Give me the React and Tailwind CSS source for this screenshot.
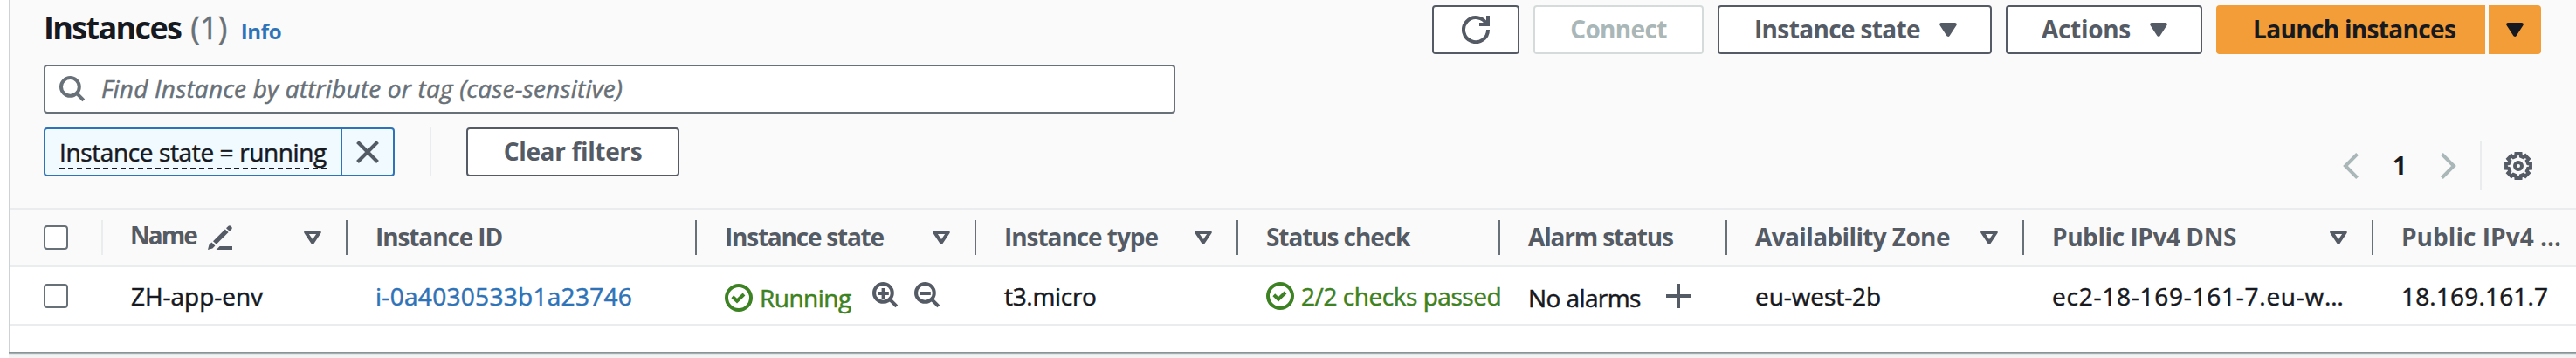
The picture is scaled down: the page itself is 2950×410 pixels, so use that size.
import React from "react";

const Caret = ({ hollow = false }) => (
  <svg width="20" height="16" viewBox="0 0 20 16" className="shrink-0" fill={hollow ? "none" : "currentColor"} stroke="currentColor" strokeWidth="4" strokeLinejoin="round">
    <path d={hollow ? "M2.2 2h15.6L10 13.6z" : "M2.2 2h15.6L10 13.8z"} />
  </svg>
);

const CheckCircle = () => (
  <svg width="32" height="32" viewBox="0 0 16 16" className="shrink-0" fill="none" stroke="currentColor" strokeWidth="2">
    <circle cx="8" cy="8" r="7" />
    <path d="M4.4 7.4 7 9.9l4-3.9" />
  </svg>
);

const Magnifier = ({ sign }) => (
  <svg width="30" height="30" viewBox="0 0 30 30" className="shrink-0" fill="none" stroke="currentColor" strokeWidth="4">
    <circle cx="12.4" cy="12.4" r="10.4" />
    <path d="m19.4 19.4 8.4 8.4" />
    {sign && <path d="M6.4 13h12.4" />}
    {sign === "plus" && <path d="M12.6 7v12" />}
  </svg>
);

const Refresh = () => (
  <svg width="32" height="32" viewBox="0 0 16 16" fill="none" stroke="currentColor" strokeWidth="2">
    <path d="M10 5h5V0" />
    <path d="M15 8a7 7 0 1 1-.7-3" />
  </svg>
);

const Pencil = () => (
  <svg width="28" height="28" viewBox="0 0 28 28" fill="currentColor">
    <path d="M23.6 0.8a2 2 0 0 1 2.6 0l1 1a2 2 0 0 1 0 2.6L24.8 6.8 21 3.2z" />
    <path d="M19.8 4.4 23.6 8 9.8 21.8 6 18.2z" />
    <path d="M4.4 19.6 8.4 23.4 5.4 26.6 0 28 1.4 22.6z" />
    <path d="M13.6 24H28v4H9.6z" />
  </svg>
);

const gearPath = (() => {
  const pts = [];
  for (let i = 0; i < 8; i++) {
    for (const [r, a] of [[11.4, -14.5], [14.2, -10.5], [14.2, 10.5], [11.4, 14.5]]) {
      const t = ((i * 45 + a) * Math.PI) / 180;
      pts.push(`${(16 + r * Math.cos(t)).toFixed(2)} ${(16 + r * Math.sin(t)).toFixed(2)}`);
    }
  }
  return `M${pts.join("L")}Z`;
})();

const Gear = () => (
  <svg width="32" height="32" viewBox="0 0 32 32" fill="none" stroke="currentColor" strokeWidth="4">
    <path d={gearPath} />
    <circle cx="16" cy="16" r="4" />
  </svg>
);

const Checkbox = () => <span className="h-7 w-7 rounded-[4px] border-2 border-[#687078] bg-white" />;

const Button = ({ className, children }) => (
  <button className={`flex h-14 items-center rounded-[4px] border-2 bg-white font-bold ${className}`}>{children}</button>
);

const HeadCell = ({ className, sort, children }) => (
  <div className={`flex h-full shrink-0 items-center justify-between pl-8 ${className}`}>
    <div className="flex items-center whitespace-nowrap pb-[2px]">{children}</div>
    <div className="flex items-center gap-7">
      {sort && <Caret hollow />}
      <span className="h-10 w-0.5 bg-[#687078]" />
    </div>
  </div>
);

const Cell = ({ className, children }) => (
  <div className={`flex h-full shrink-0 items-center overflow-hidden whitespace-nowrap pl-8 [-webkit-text-stroke:0.5px] ${className}`}>{children}</div>
);

export default function App() {
  return (
    <div className="flex h-[410px] w-[2950px] overflow-hidden bg-white pl-2.5 font-['Open_Sans','Noto_Sans',sans-serif] text-[28px] leading-10 text-[#16191f]">
      <div className="flex min-w-0 flex-1 flex-col bg-[#f2f3f3]">
        <div className="flex h-[403px] flex-col border-l-2 border-[#ccd3d4] bg-white">
          <div className="flex h-[238px] shrink-0 justify-between bg-[#fafafa] pl-[38px] pr-10">
            <div className="flex flex-col">
              <div className="flex h-[74px] items-baseline pt-[8px]">
                <h1 className="text-[36px] font-bold leading-[48px] tracking-[-1.66px]">Instances</h1>
                <span className="ml-[11px] text-[36px] leading-[48px] tracking-[0.2px] text-[#687078] [-webkit-text-stroke:0.5px]">(1)</span>
                <a className="ml-[15px] text-[24px] font-bold tracking-[-0.34px] text-[#2e73b8]">Info</a>
              </div>
              <div className="flex h-14 w-[1296px] items-center rounded-[4px] border-2 border-[#687078] bg-white pl-4 text-[#687078]">
                <Magnifier />
                <span className="ml-[18px] pb-[2px] italic tracking-[0.2px] [-webkit-text-stroke:0.5px]">Find Instance by attribute or tag (case-sensitive)</span>
              </div>
              <div className="mt-4 flex h-14 items-center">
                <div className="flex h-14 w-[402px] rounded-[4px] border-2 border-[#2e73b8] bg-[#f1faff]">
                  <div className="flex w-[340px] items-center border-r-2 border-[#2e73b8] pl-4">
                    <span className="whitespace-nowrap bg-[repeating-linear-gradient(90deg,#16191f_0_6px,transparent_6px_10px)] bg-[length:100%_2px] bg-bottom bg-no-repeat tracking-[-0.38px] [-webkit-text-stroke:0.5px]">Instance state = running</span>
                  </div>
                  <div className="flex flex-1 items-center justify-center text-[#545b64]">
                    <svg width="26" height="26" viewBox="0 0 26 26" stroke="currentColor" strokeWidth="4">
                      <path d="m1.5 1.5 23 23m0-23-23 23" />
                    </svg>
                  </div>
                </div>
                <span className="ml-10 h-14 w-0.5 bg-[#eaeded]" />
                <Button className="ml-10 w-[244px] justify-center border-[#545b64] pb-[2px] tracking-[-0.35px] text-[#545b64]">Clear filters</Button>
              </div>
            </div>
            <div className="flex flex-col items-end pt-1.5">
              <div className="flex gap-4 text-[#545b64]">
                <Button className="w-[100px] justify-center border-[#545b64]"><Refresh /></Button>
                <Button className="w-[195px] justify-center border-[#d5dbdb] pb-[2px] tracking-[-0.65px] text-[#aab7b8]">Connect</Button>
                <Button className="w-[314px] justify-between border-[#545b64] pl-[40px] pr-[38px] tracking-[-0.65px]">
                  <span className="pb-[2px]">Instance state</span><Caret />
                </Button>
                <Button className="w-[225px] justify-between border-[#545b64] pl-[39px] pr-[38px] tracking-[-0.3px]">
                  <span className="pb-[2px]">Actions</span><Caret />
                </Button>
                <div className="flex gap-1 font-bold text-[#16191f]">
                  <button className="flex h-14 w-[308px] items-center rounded-l-[4px] bg-[#f29d38] pb-[2px] pl-[42px] tracking-[-0.66px]">Launch instances</button>
                  <button className="flex h-14 w-[60px] items-center justify-center rounded-r-[4px] bg-[#f29d38]"><Caret /></button>
                </div>
              </div>
              <div className="mt-[100px] flex h-14 items-center text-[#aab7b8]">
                <svg width="18" height="30" viewBox="0 0 18 30" fill="none" stroke="currentColor" strokeWidth="4"><path d="M16.6 1.4 3 15l13.6 13.6" /></svg>
                <span className="flex w-[94px] justify-center pb-[2px] font-bold text-[#16191f]">1</span>
                <svg width="18" height="30" viewBox="0 0 18 30" fill="none" stroke="currentColor" strokeWidth="4"><path d="M1.4 1.4 15 15 1.4 28.6" /></svg>
                <span className="ml-[27px] h-14 w-0.5 bg-[#eaeded]" />
                <span className="ml-[26px] mr-[10px] text-[#545b64]"><Gear /></span>
              </div>
            </div>
          </div>

          <div className="flex h-[68px] shrink-0 items-center border-y-2 border-[#eaeded] bg-[#fafafa] font-bold text-[#545b64]">
            <div className="flex w-[106px] shrink-0 items-center justify-between pl-[38px]">
              <Checkbox />
              <span className="h-10 w-0.5 bg-[#eaeded]" />
            </div>
            <HeadCell className="w-[280px]" sort>
              <span className="-ml-px mb-1 tracking-[-2px]">Name</span>
              <span className="ml-[13px] mt-[2px]"><Pencil /></span>
            </HeadCell>
            <HeadCell className="w-[400px] tracking-[-1.1px]">Instance ID</HeadCell>
            <HeadCell className="w-[320px] tracking-[-1.22px]" sort>Instance state</HeadCell>
            <HeadCell className="w-[300px] tracking-[-1.05px]" sort>Instance type</HeadCell>
            <HeadCell className="w-[300px] tracking-[-1.09px]">Status check</HeadCell>
            <HeadCell className="w-[260px] tracking-[-1.16px]">Alarm status</HeadCell>
            <HeadCell className="w-[340px] tracking-[-0.62px]" sort>Availability Zone</HeadCell>
            <HeadCell className="w-[400px] tracking-[-0.43px]" sort>Public IPv4 DNS</HeadCell>
            <div className="flex shrink-0 items-center whitespace-nowrap pb-[2px] pl-8 tracking-[0.04px]">Public IPv4 …</div>
          </div>

          <div className="flex h-[67px] shrink-0 items-center border-b-2 border-[#eaeded]">
            <div className="flex w-[106px] shrink-0 items-center pl-[38px]"><Checkbox /></div>
            <Cell className="w-[280px] tracking-[-0.04px]">ZH-app-env</Cell>
            <Cell className="w-[400px] tracking-[0.3px] text-[#2e73b8]">i-0a4030533b1a23746</Cell>
            <Cell className="w-[320px]">
              <span className="flex items-center pt-[5px] text-[#3d8222]">
                <CheckCircle />
                <span className="ml-2 w-[105px] tracking-[-0.51px]">Running</span>
              </span>
              <span className="ml-6 flex gap-[18px] pb-[1px] text-[#545b64]">
                <Magnifier sign="plus" />
                <Magnifier sign="minus" />
              </span>
            </Cell>
            <Cell className="w-[300px] tracking-[-0.31px]">t3.micro</Cell>
            <Cell className="w-[300px] text-[#3d8222]">
              <CheckCircle />
              <span className="ml-2 tracking-[-0.45px]">2/2 checks passed</span>
            </Cell>
            <Cell className="w-[260px]">
              <span className="w-[128px] pt-[4px] tracking-[-0.59px]">No alarms</span>
              <svg width="28" height="28" viewBox="0 0 28 28" className="ml-[30px] shrink-0 text-[#545b64]" stroke="currentColor" strokeWidth="4"><path d="M0 14h28M14 0v28" /></svg>
            </Cell>
            <Cell className="w-[340px] tracking-[-0.07px]">eu-west-2b</Cell>
            <Cell className="w-[400px] tracking-[0.75px]">ec2-18-169-161-7.eu-w…</Cell>
            <Cell className="tracking-[0.17px]">18.169.161.7</Cell>
          </div>
        </div>
        <div className="h-[1px] bg-[#879596]" />
        <div className="h-[1px] bg-[#a3acb0]" />
        <div className="h-[1px] bg-[#e3e6e7]" />
      </div>
    </div>
  );
}
